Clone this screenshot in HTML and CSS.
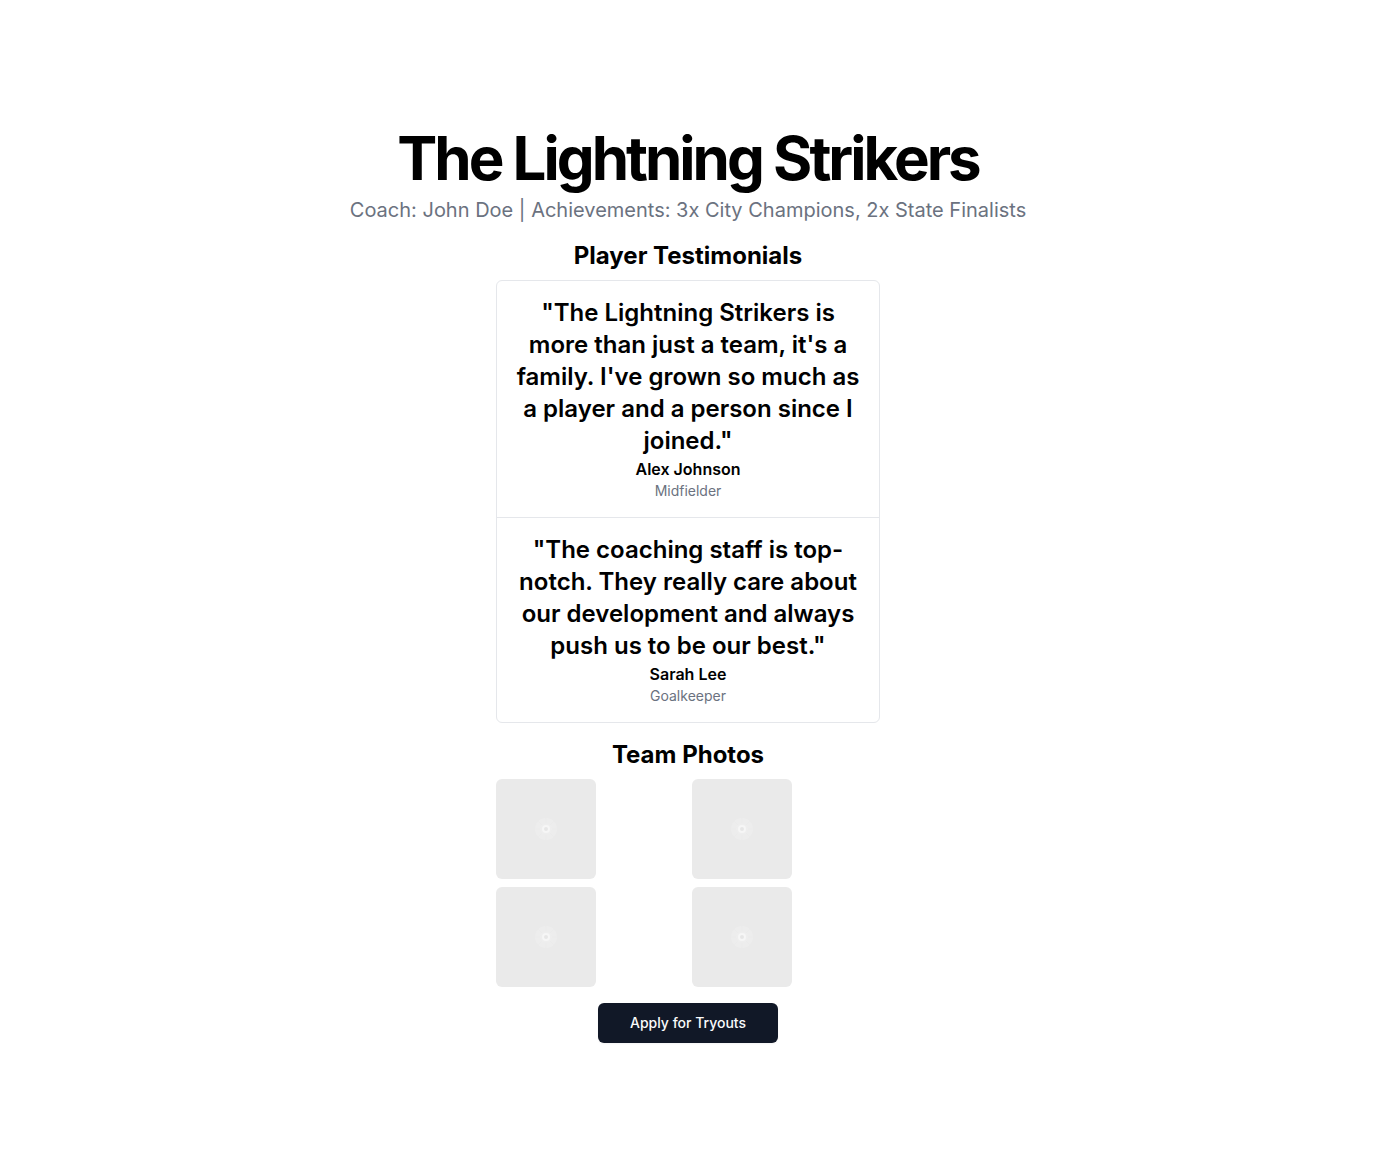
FILE: index.html
```html
<!DOCTYPE html>
<html lang="en">
<head>
<meta charset="utf-8">
<meta name="viewport" content="width=device-width, initial-scale=1">
<title>The Lightning Strikers</title>
<link rel="stylesheet" href="styles.css">
</head>
<body>
<svg width="0" height="0" class="defs" aria-hidden="true">
  <symbol id="placeholder" viewBox="0 0 24 24">
    <circle cx="12" cy="12" r="11" fill="#ededed"/>
    <path d="M12 1v22M1 12h22M4 4l16 16M20 4L4 20" stroke="#ebebeb" stroke-width="1"/>
    <circle cx="12" cy="12" r="6" fill="#eeeeee"/>
    <circle cx="12" cy="12" r="3" fill="#e6e6e6" stroke="#f6f6f6" stroke-width="2"/>
  </symbol>
</svg>
<main class="team">
  <header class="intro">
    <h1 class="title">The Lightning Strikers</h1>
    <p class="subtitle">Coach: John Doe | Achievements: 3x City Champions, 2x State Finalists</p>
  </header>
  <section class="section">
    <h2 class="heading">Player Testimonials</h2>
    <div class="testimonials">
      <figure class="testimonial">
        <blockquote class="quote">"The Lightning Strikers is more than just a team, it's a family. I've grown so much as a player and a person since I joined."</blockquote>
        <figcaption><div class="name">Alex Johnson</div><div class="role">Midfielder</div></figcaption>
      </figure>
      <figure class="testimonial">
        <blockquote class="quote">"The coaching staff is top-notch. They really care about our development and always push us to be our best."</blockquote>
        <figcaption><div class="name">Sarah Lee</div><div class="role">Goalkeeper</div></figcaption>
      </figure>
    </div>
  </section>
  <section class="section">
    <h2 class="heading">Team Photos</h2>
    <div class="photos">
      <div class="photo"><svg class="mark" aria-hidden="true"><use href="#placeholder"/></svg></div>
      <div class="photo"><svg class="mark" aria-hidden="true"><use href="#placeholder"/></svg></div>
      <div class="photo"><svg class="mark" aria-hidden="true"><use href="#placeholder"/></svg></div>
      <div class="photo"><svg class="mark" aria-hidden="true"><use href="#placeholder"/></svg></div>
    </div>
  </section>
  <button class="apply" type="button">Apply for Tryouts</button>
</main>
</body>
</html>
```
FILE: styles.css
```css
*, *::before, *::after { box-sizing: border-box; }
body, h1, h2, p, figure, blockquote { margin: 0; }
body {
  background: #fff;
  color: #000;
  font-family: Inter, "Liberation Sans", sans-serif;
  font-size: 16px;
  line-height: 24px;
}
.defs { display: none; }
.team {
  display: flex;
  flex-direction: column;
  align-items: center;
  gap: 16px;
  padding: 128px 24px;
  text-align: center;
}
.intro, .section {
  display: flex;
  flex-direction: column;
  gap: 8px;
}
.section { width: 100%; max-width: 384px; }
.title {
  font-size: 60px;
  line-height: 60px;
  font-weight: 700;
  letter-spacing: -0.05em;
}
.subtitle { font-size: 20px; line-height: 28px; color: #6b7280; }
.heading { font-size: 24px; line-height: 32px; font-weight: 700; }
.testimonials { border: 1px solid #e5e7eb; border-radius: 6px; }
.testimonial { padding: 16px; }
.testimonial + .testimonial { border-top: 1px solid #e5e7eb; }
.quote { font-size: 24px; line-height: 32px; font-weight: 600; }
.name { font-weight: 600; }
.role { font-size: 14px; line-height: 20px; color: #6b7280; }
.photos {
  display: grid;
  grid-template-columns: 1fr 1fr;
  gap: 8px;
}
.photo {
  display: grid;
  place-items: center;
  width: 100px;
  height: 100px;
  border-radius: 6px;
  background: #eaeaea;
}
.mark { width: 24px; height: 24px; }
.apply {
  height: 40px;
  padding: 0 32px;
  border: 0;
  border-radius: 6px;
  background: #111827;
  color: #f9fafb;
  font: 500 14px/20px Inter, "Liberation Sans", sans-serif;
  box-shadow: 0 1px 2px rgb(0 0 0 / 5%);
}
```
